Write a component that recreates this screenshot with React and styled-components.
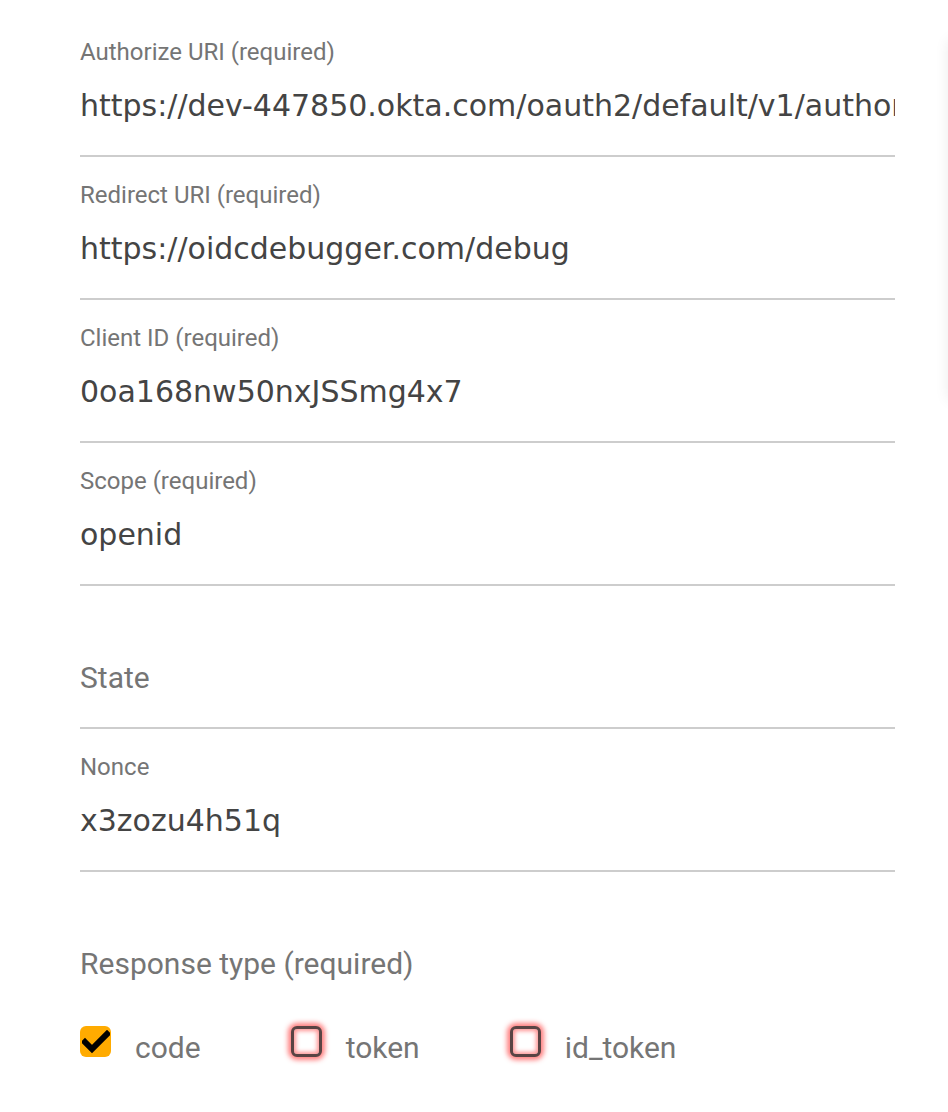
import React from "react";
import styled, { createGlobalStyle } from "styled-components";

const Global = createGlobalStyle`
  html, body { margin: 0; padding: 0; background: #fff; }
  body { font-family: Roboto, "Liberation Sans", sans-serif; }
  * { box-sizing: border-box; }
`;

const Page = styled.div`
  position: relative;
  width: 948px;
  height: 1112px;
  overflow: hidden;
  background: #fff;
`;

const EdgeShadow = styled.div`
  position: absolute;
  top: 40px;
  right: -40px;
  width: 40px;
  height: 360px;
  box-shadow: 0 0 14px rgba(0, 0, 0, 0.08);
  background: #fff;
`;

const Form = styled.form`
  width: 815px;
  margin-left: 80px;
  padding-top: 14px;
  display: flex;
  flex-direction: column;
`;

const Field = styled.div`
  height: 143px;
  padding-top: 24px;
  border-bottom: 2px solid #cdcdcd;
  display: flex;
  flex-direction: column;
`;

const Label = styled.div`
  height: 28px;
  line-height: 28px;
  font-family: Roboto, sans-serif;
  font-size: 24px;
  color: #757575;
  white-space: nowrap;
`;

const Value = styled.div`
  margin-top: 22px;
  height: 36px;
  line-height: 36px;
  font-family: ${(p) => (p.$placeholder ? "Roboto, sans-serif" : '"DejaVu Sans", sans-serif')};
  font-size: 30px;
  color: ${(p) => (p.$placeholder ? "#757575" : "#444")};
  white-space: nowrap;
  overflow: hidden;
`;

const Section = styled.div`
  padding-top: 74px;
`;

const SectionTitle = styled.div`
  font-family: Roboto, sans-serif;
  font-size: 30px;
  line-height: 36px;
  color: #757575;
`;

const Options = styled.div`
  margin-top: 44px;
  display: flex;
  align-items: center;
  gap: 90px;
`;

const Option = styled.label`
  display: flex;
  align-items: center;
  gap: 24px;
  font-family: Roboto, sans-serif;
  font-size: 30px;
  line-height: 36px;
  color: #757575;
`;

const Box = styled.span`
  width: 31px;
  height: 31px;
  margin-bottom: 12px;
  border-radius: 6px;
  display: flex;
  align-items: center;
  justify-content: center;
  ${(p) =>
    p.$checked
      ? `background: #ffab00;`
      : `background: #fff;
         border: 3px solid #5a4444;
         box-shadow: 0 0 5px 3px rgba(255, 40, 40, 0.6), inset 0 0 4px 2px rgba(255, 40, 40, 0.5);`}
`;

const fields = [
  { label: "Authorize URI (required)", value: "https://dev-447850.okta.com/oauth2/default/v1/authorize" },
  { label: "Redirect URI (required)", value: "https://oidcdebugger.com/debug" },
  { label: "Client ID (required)", value: "0oa168nw50nxJSSmg4x7" },
  { label: "Scope (required)", value: "openid" },
  { label: "", value: "State", placeholder: true },
  { label: "Nonce", value: "x3zozu4h51q" },
];

const options = [
  { name: "code", checked: true },
  { name: "token", checked: false },
  { name: "id_token", checked: false },
];

export default function App() {
  return (
    <Page>
      <Global />
      <EdgeShadow />
      <Form>
        {fields.map((f) => (
          <Field key={f.value}>
            <Label>{f.label}</Label>
            <Value $placeholder={f.placeholder}>{f.value}</Value>
          </Field>
        ))}
        <Section>
          <SectionTitle>Response type (required)</SectionTitle>
          <Options>
            {options.map((o) => (
              <Option key={o.name}>
                <Box $checked={o.checked}>
                  {o.checked && (
                    <svg width="28" height="24" viewBox="0 0 28 24">
                      <path d="M3 12 L10 19 L25 4" fill="none" stroke="#000" strokeWidth="6" strokeLinecap="square" />
                    </svg>
                  )}
                </Box>
                {o.name}
              </Option>
            ))}
          </Options>
        </Section>
      </Form>
    </Page>
  );
}
